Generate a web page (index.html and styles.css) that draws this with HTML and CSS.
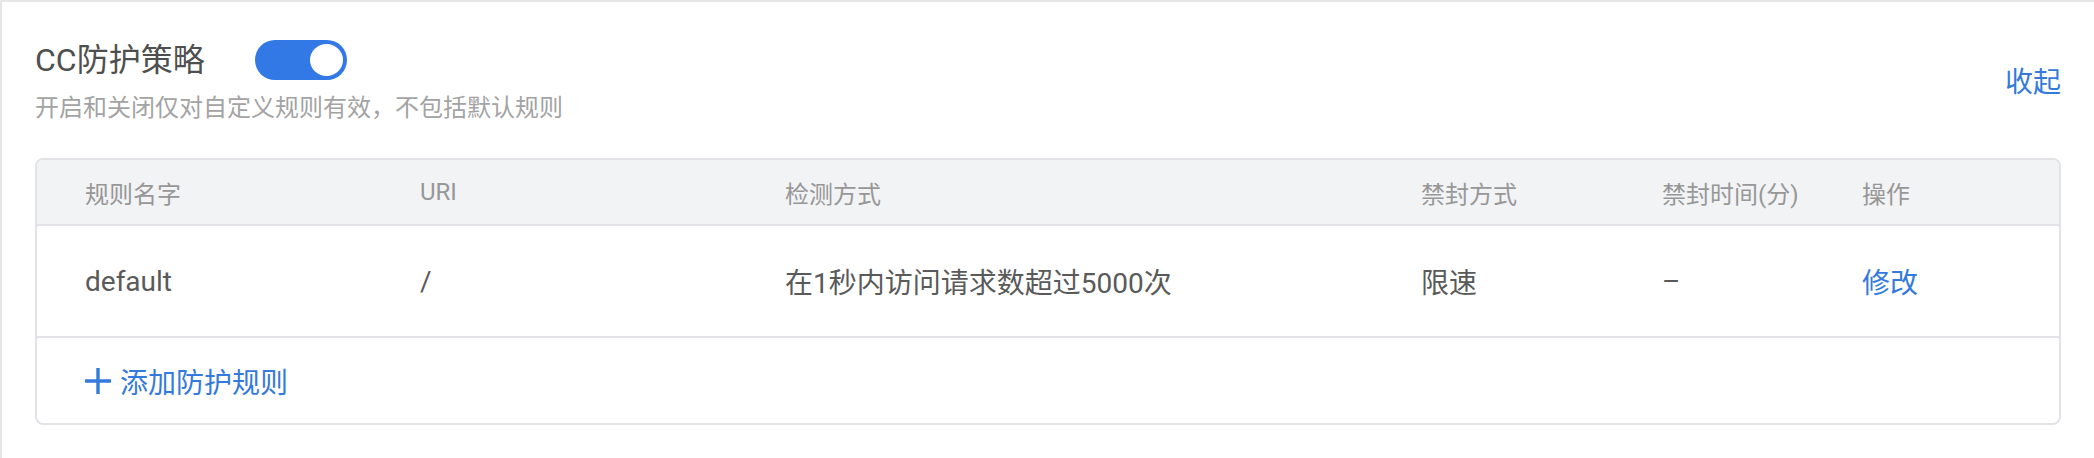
FILE: index.html
```html
<!DOCTYPE html>
<html lang="zh-CN">
<head>
<meta charset="utf-8">
<title>CC防护策略</title>
<link rel="stylesheet" href="styles.css">
</head>
<body>
<div class="page">
  <div class="head">
    <div class="head-main">
      <div class="title-row">
        <h2 class="title">CC防护策略</h2>
        <span class="switch"><span class="knob"></span></span>
      </div>
      <p class="desc">开启和关闭仅对自定义规则有效，不包括默认规则</p>
    </div>
    <a class="collapse">收起</a>
  </div>
  <div class="table">
    <div class="row thead">
      <div class="cell">规则名字</div>
      <div class="cell">URI</div>
      <div class="cell">检测方式</div>
      <div class="cell">禁封方式</div>
      <div class="cell">禁封时间(分)</div>
      <div class="cell">操作</div>
    </div>
    <div class="row tbody">
      <div class="cell">default</div>
      <div class="cell">/</div>
      <div class="cell">在1秒内访问请求数超过5000次</div>
      <div class="cell">限速</div>
      <div class="cell">–</div>
      <div class="cell"><a class="link">修改</a></div>
    </div>
    <div class="add">
      <a class="add-link">
        <svg class="plus" viewBox="0 0 28 28" width="28" height="28" aria-hidden="true"><path d="M14 1v26M1 14h26" stroke="currentColor" stroke-width="3.4" fill="none"/></svg>
        <span>添加防护规则</span>
      </a>
    </div>
  </div>
</div>
</body>
</html>
```
FILE: styles.css
```css
html, body {
  margin: 0;
  padding: 0;
  background: #ffffff;
}
body {
  font-family: Roboto, "Noto Sans CJK SC", sans-serif;
  color: #555555;
}
.page {
  box-sizing: border-box;
  min-height: 100vh;
  border-top: 2px solid #e6e6e6;
  border-left: 2px solid #e6e6e6;
  padding: 38px 33px 0 33px;
}
.head {
  display: flex;
  align-items: center;
  justify-content: space-between;
}
.title-row {
  display: flex;
  align-items: center;
  height: 40px;
}
.title {
  margin: 0;
  font-size: 32px;
  font-weight: 400;
  line-height: 40px;
  color: #4f4f4f;
}
.switch {
  display: flex;
  align-items: center;
  justify-content: flex-end;
  box-sizing: border-box;
  width: 92px;
  height: 40px;
  margin-left: 50px;
  padding: 0 4px;
  border-radius: 20px;
  background: #3279e6;
}
.knob {
  width: 33px;
  height: 32px;
  border-radius: 50%;
  background: #ffffff;
}
.desc {
  margin: 12px 0 0 0;
  font-size: 24px;
  line-height: 32px;
  color: #a3a3a3;
}
.collapse {
  font-size: 28px;
  line-height: 36px;
  color: #3479dc;
  cursor: pointer;
  margin-top: 2px;
}
.table {
  margin-top: 34px;
  border: 2px solid #e1e3e7;
  border-radius: 8px;
  overflow: hidden;
}
.row {
  display: grid;
  grid-template-columns: 335px 365px 636px 241px 200px 1fr;
  padding-left: 48px;
  align-items: center;
  border-bottom: 2px solid #e1e3e7;
}
.thead {
  height: 64px;
  background: #f2f3f5;
  font-size: 24px;
  color: #979797;
}
.tbody {
  height: 110px;
  font-size: 28px;
  color: #5a5a5a;
}
.cell {
  white-space: nowrap;
}
.link {
  color: #3479dc;
  cursor: pointer;
}
.add {
  display: flex;
  align-items: center;
  height: 85px;
  padding-left: 47px;
}
.add-link {
  display: flex;
  align-items: center;
  gap: 8px;
  font-size: 28px;
  color: #3479dc;
  cursor: pointer;
}
.plus {
  display: block;
}
```
